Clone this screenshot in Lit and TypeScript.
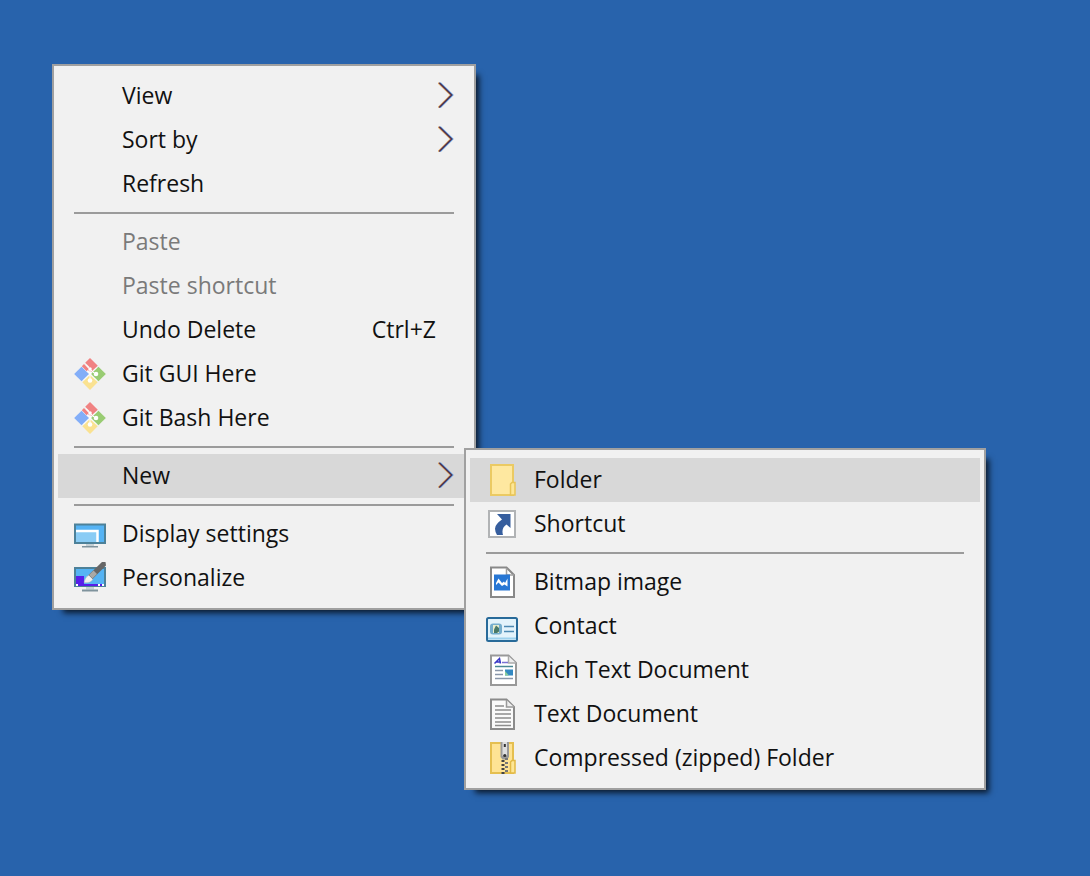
import { LitElement, html, css, svg, nothing, TemplateResult } from "lit";
import { customElement, property } from "lit/decorators.js";

type Entry =
  | "separator"
  | {
      label: string;
      icon?: string;
      disabled?: boolean;
      shortcut?: string;
      active?: boolean;
      children?: Entry[];
    };

const page = "M5 1.5H20.5L28 9V31H5Z";

const icons: Record<string, TemplateResult> = {
  git: svg`
    <path fill="#fafafa" d="M16 3L29 16L16 29L3 16Z"/>
    <path fill="#f08282" d="M16 0L23.800 7.800L17.500 13.500L15.500 13.500L13.500 11.500L15.500 9L11.200 4.800Z"/>
    <path fill="#f08282" d="M10 6L14.800 11L12.600 13.200L7.800 8.200Z"/>
    <path fill="#83aef8" d="M7.500 8.700L15 16L7.500 23.300L0.200 16Z"/>
    <path fill="#99cc73" d="M24.500 8.700L31.800 16L24.500 23.300L17.500 16.500V15.500Z"/>
    <path fill="#fae291" d="M16 17L23.700 24.300L16 32L8.300 24.300Z"/>
    <circle cx="22" cy="16" r="2.300" fill="#fff"/>
    <circle cx="16" cy="22.500" r="2.300" fill="#fff"/>
    <circle cx="16" cy="11" r="1.800" fill="#fff"/>
    <path d="M16 11V22M16 11L20 15" stroke="#fff" stroke-width="1"/>`,
  display: svg`
    <rect x="1" y="6.500" width="30" height="18.500" fill="#55b3f4" stroke="#4d8199" stroke-width="2"/>
    <path d="M2 24V14H24V24Z" fill="#8accf5"/>
    <path d="M2 13H23.500V24" fill="none" stroke="#fff" stroke-width="2.500"/>
    <path d="M12 26H20V28H12Z" fill="#c5d0d5"/>
    <path d="M8 28H24V29.500H8Z" fill="#7f939d"/>`,
  personalize: svg`
    <rect x="1" y="6" width="30" height="18" fill="#55b3f4" stroke="#4d8199" stroke-width="2"/>
    <path d="M2 14H10V22H30V24H2Z" fill="#571eea"/>
    <path d="M2 22H4V24H2ZM24 22H26V24H24ZM28 22H30V24H28Z" fill="#fff"/>
    <path d="M10 20.500Q11 15 15 13L19 17Q17 21.500 10 20.500Z" fill="#f0f0ef" stroke="#aab0b2" stroke-width="0.500"/>
    <path d="M14.500 13L28 0L31.500 0L32 3.500L18.500 17Z" fill="#666"/>
    <path d="M15 13L18.500 16.500L23 12L19.500 8.500Z" fill="#a9a9a7"/>
    <path d="M12 25H20V27.500H12Z" fill="#c5d0d5"/>
    <path d="M8 27.500H24V29.500H8Z" fill="#7f939d"/>`,
  folder: svg`
    <path d="M5 1H27V31H5Z" fill="#fee8a0" stroke="#ebca63" stroke-width="2"/>
    <path d="M24.500 31V20L26 18.500H29V31Z" fill="#fde696" stroke="#e8c457" stroke-width="1.500"/>`,
  shortcut: svg`
    <rect x="3" y="3" width="26" height="26" fill="#fff" stroke="#b1b3b5" stroke-width="2"/>
    <path d="M11 6H24.500V20L20.500 16.500Q15 20 17 27H11Q7 20 11 16Q13 13.500 16 11.500Z" fill="#365e9e"/>`,
  bitmap: svg`
    <path d=${page} fill="#fff" stroke="#898989" stroke-width="2"/>
    <path d="M20.500 2V9H28" fill="none" stroke="#a0a0a0" stroke-width="1.500"/>
    <rect x="8" y="8.500" width="16" height="16" fill="#2877d4"/>
    <path d="M10 17L12.500 12.500L16 17L18 15.500L19 17L21.500 12.500V20.500L18.500 18.500L16 20L12.500 16.500L10 19Z" fill="#fff"/>`,
  contact: svg`
    <rect x="1" y="8" width="30" height="23" rx="1.500" fill="#e3f3fb" stroke="#286a99" stroke-width="2"/>
    <path d="M2 28.500H30" stroke="#9dd1ed" stroke-width="2"/>
    <rect x="4" y="13.500" width="12" height="11" rx="3" fill="#75aecd"/>
    <rect x="7" y="15" width="6" height="8" fill="#e8edcf"/>
    <path d="M10 15.500L13 18V21.500L11 23H8V19.500Z" fill="#497968"/>
    <path d="M18 16.500H28M18 21.500H28" stroke="#4c89b2" stroke-width="1.500"/>`,
  rich: svg`
    <path d="M5 1.500H22.500L30 9V31H5Z" fill="#fff" stroke="#999" stroke-width="2"/>
    <path d="M22.500 2V9H30" fill="#eee" stroke="#aaa" stroke-width="1.500"/>
    <path d="M8.500 9.500L13.500 4.500L14.500 9.500M10.500 8H14" fill="none" stroke="#3836c6" stroke-width="1.500"/>
    <path d="M16 8.500H22" stroke="#7972d3" stroke-width="1.500"/>
    <path d="M9 12.500H27" stroke="#498894" stroke-width="1.500"/>
    <path d="M9 16.500H17M9 20.500H17M9 24.500H27" stroke="#8996aa" stroke-width="1.500"/>
    <rect x="19" y="15.500" width="8" height="6" fill="#3288c2"/>
    <path d="M19 21.500V17L23 21.500Z" fill="#8acd9c"/>`,
  text: svg`
    <path d=${page} fill="#fafafa" stroke="#8b8b8b" stroke-width="2"/>
    <path d="M20.500 2V9H28" fill="#eee" stroke="#999" stroke-width="1.500"/>
    <path d="M9 8H18M9 12H25M9 16H25M9 20H25M9 24H25M9 27.500H25" stroke="#8d8d8d" stroke-width="1.300"/>`,
  zip: svg`
    <path d="M5 1H27V31H5Z" fill="#fee394" stroke="#e5bf50" stroke-width="2"/>
    <path d="M24.500 31V20L26 18.500H29V31Z" fill="#fde696" stroke="#e2b944" stroke-width="1.500"/>
    <path d="M14.500 0H23V15L21 17.500H16.500L14.500 15Z" fill="#999"/>
    <path d="M16.500 0H21V14H16.500Z" fill="#dedede"/>
    <path d="M18.800 2V5" stroke="#333" stroke-width="2"/>
    <circle cx="18.800" cy="13.500" r="1.600" fill="#333"/>
    <path d="M17 18V32" stroke="#444" stroke-width="3" stroke-dasharray="2 2"/>
    <path d="M20.500 16V32" stroke="#777" stroke-width="3" stroke-dasharray="2 2"/>`,
};

const newEntries: Entry[] = [
  { label: "Folder", icon: "folder", active: true },
  { label: "Shortcut", icon: "shortcut" },
  "separator",
  { label: "Bitmap image", icon: "bitmap" },
  { label: "Contact", icon: "contact" },
  { label: "Rich Text Document", icon: "rich" },
  { label: "Text Document", icon: "text" },
  { label: "Compressed (zipped) Folder", icon: "zip" },
];

const desktopEntries: Entry[] = [
  { label: "View", children: [] },
  { label: "Sort by", children: [] },
  { label: "Refresh" },
  "separator",
  { label: "Paste", disabled: true },
  { label: "Paste shortcut", disabled: true },
  { label: "Undo Delete", shortcut: "Ctrl+Z" },
  { label: "Git GUI Here", icon: "git" },
  { label: "Git Bash Here", icon: "git" },
  "separator",
  { label: "New", active: true, children: newEntries },
  "separator",
  { label: "Display settings", icon: "display" },
  { label: "Personalize", icon: "personalize" },
];

@customElement("context-menu")
export class ContextMenu extends LitElement {
  @property({ attribute: false }) entries: Entry[] = [];

  static styles = css`
    :host {
      display: block;
      box-sizing: border-box;
      padding: 8px 4px;
      border: 2px solid #a0a0a0;
      background: #f1f1f1;
      box-shadow: 7px 7px 6px -4px rgba(0, 0, 0, 0.75);
      font: 23px/42px "Open Sans", "Noto Sans", sans-serif;
      color: #111;
    }
    .list {
      margin: 0;
      padding: 0;
      list-style: none;
    }
    .row {
      position: relative;
    }
    .item {
      display: flex;
      align-items: center;
      gap: 16px;
      width: 100%;
      height: 44px;
      padding: 0 16px;
      border: 0;
      background: none;
      font: inherit;
      color: inherit;
      text-align: left;
      white-space: nowrap;
    }
    .item:hover:enabled,
    .item.active {
      background: #d8d8d8;
    }
    .item:disabled {
      color: #7a7a7a;
    }
    .icon {
      flex: none;
      width: 32px;
      height: 32px;
    }
    .label,
    .shortcut {
      padding-bottom: 2px;
    }
    .label {
      flex: 1;
    }
    .shortcut {
      padding-right: 18px;
    }
    .chevron {
      flex: none;
      width: 16px;
      height: 28px;
    }
    .separator {
      height: 2px;
      margin: 6px 16px;
      background: #9b9b9b;
    }
    .submenu {
      position: absolute;
      top: -6px;
      left: calc(100% - 6px);
      z-index: 1;
      width: 522px;
    }
  `;

  private renderEntry(entry: Entry): TemplateResult {
    if (entry === "separator") {
      return html`<li class="separator" role="separator"></li>`;
    }
    const open = !!entry.active && !!entry.children?.length;
    return html`
      <li class="row" role="none">
        <button
          class="item ${entry.active ? "active" : ""}"
          type="button"
          role="menuitem"
          ?disabled=${entry.disabled}
          aria-haspopup=${entry.children ? "menu" : nothing}
          aria-expanded=${entry.children ? String(open) : nothing}
        >
          <svg class="icon" viewBox="0 0 32 32" aria-hidden="true">
            ${entry.icon ? icons[entry.icon] : nothing}
          </svg>
          <span class="label">${entry.label}</span>
          ${entry.shortcut ? html`<span class="shortcut">${entry.shortcut}</span>` : nothing}
          ${entry.children
            ? html`<svg class="chevron" viewBox="0 0 16 28" fill="none" aria-hidden="true">
                <path d="M0.200 0.800L12.700 13L0.200 25.500" stroke="#dda45c" stroke-width="1.500" />
                <path d="M2.200 0.800L14.700 13L2.200 25.500" stroke="#5b9ce0" stroke-width="1.500" />
                <path d="M1.200 0.800L13.700 13L1.200 25.500" stroke="#4b2a4c" stroke-width="1.300" />
              </svg>`
            : nothing}
        </button>
        ${open
          ? html`<context-menu class="submenu" .entries=${entry.children}></context-menu>`
          : nothing}
      </li>
    `;
  }

  render() {
    return html`<ul class="list" role="menu">
      ${this.entries.map((entry) => this.renderEntry(entry))}
    </ul>`;
  }
}

@customElement("app-root")
export class AppRoot extends LitElement {
  static styles = css`
    :host {
      display: block;
      box-sizing: border-box;
      min-height: 100vh;
      padding: 64px 52px;
      background: #2863ac;
    }
    .menu {
      width: 424px;
    }
  `;

  render() {
    return html`<context-menu class="menu" .entries=${desktopEntries}></context-menu>`;
  }
}
